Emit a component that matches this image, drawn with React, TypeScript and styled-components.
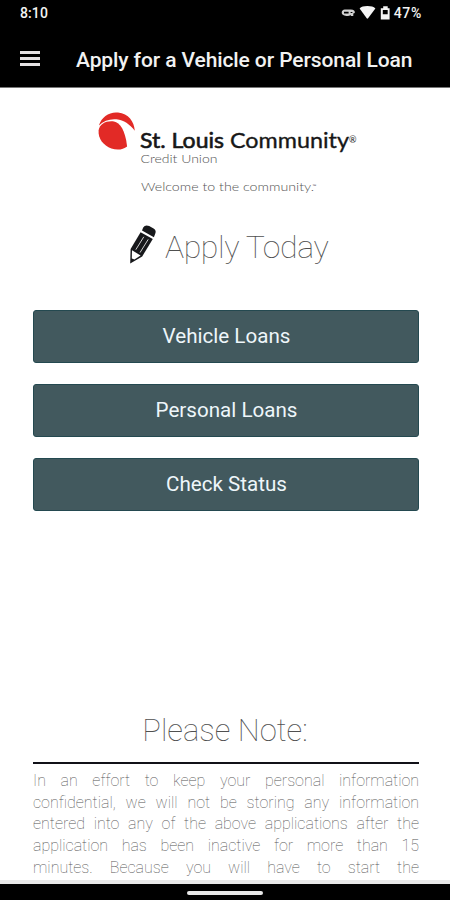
import React from 'react';
import styled, { createGlobalStyle } from 'styled-components';

const GlobalStyle = createGlobalStyle`
  * { box-sizing: border-box; }
  body { margin: 0; background: #fff; font-family: Roboto, sans-serif; }
`;

const Screen = styled.div`
  width: 450px;
  height: 900px;
  display: flex;
  flex-direction: column;
  overflow: hidden;
  background: #fff;
`;

const StatusBar = styled.div`
  flex: none;
  height: 28px;
  padding: 0 29px 2px 20px;
  display: flex;
  align-items: center;
  justify-content: space-between;
  background: #000;
  color: #f4f4f4;
  font-size: 14px;
  font-weight: 500;
`;

const Clock = styled.span`
  letter-spacing: 0.1px;
`;

const StatusIcons = styled.div`
  display: flex;
  align-items: center;
`;

const Battery = styled.span`
  margin-left: 3px;
  letter-spacing: 0.7px;
  margin-right: -1px;
`;

const TopBar = styled.header`
  flex: none;
  height: 60px;
  padding: 2px 0 0 20px;
  display: flex;
  align-items: center;
  background: #000;
  border-bottom: 1px solid #777;
`;

const MenuButton = styled.button`
  width: 20px;
  height: 16px;
  padding: 0;
  border: 0;
  background: none;
  display: flex;
  flex-direction: column;
  justify-content: center;
  gap: 3px;
`;

const MenuLine = styled.span`
  height: 3px;
  background: #e6e2e4;
`;

const Title = styled.h1`
  margin: 3px 0 0 36px;
  font-size: 21px;
  line-height: 28px;
  font-weight: 500;
  letter-spacing: -0.1px;
  color: #f2f2f2;
  white-space: nowrap;
`;

const Content = styled.main`
  flex: 1;
  min-height: 0;
  padding: 22px 31px 0 33px;
  display: flex;
  flex-direction: column;
  overflow: hidden;
`;

const Logo = styled.svg`
  flex: none;
  display: block;
  margin-left: 62px;
`;

const ApplyHeading = styled.h2`
  margin: 29px 0 0 94px;
  height: 44px;
  display: flex;
  align-items: center;
  gap: 8px;
  font-size: 32px;
  font-weight: 100;
  letter-spacing: -0.4px;
  color: #505050;
  white-space: nowrap;
`;

const ApplyLabel = styled.span`
  padding-top: 3px;
`;

const Buttons = styled.div`
  margin-top: 43px;
  display: flex;
  flex-direction: column;
  gap: 21px;
`;

const LoanButton = styled.button`
  height: 53px;
  padding: 0 0 1px 1px;
  border: 1px solid #244950;
  border-radius: 3px;
  background: #42595e;
  color: #eef6fa;
  font: 400 20.6px/24px Roboto, sans-serif;
`;

const NoteHeading = styled.h2`
  margin: 199px 0 0;
  height: 42px;
  line-height: 42px;
  padding-right: 2px;
  text-align: center;
  font-size: 31px;
  font-weight: 100;
  color: #505050;
`;

const Rule = styled.hr`
  width: 100%;
  margin: 10px 0 6px;
  border: 0;
  flex: none;
  height: 2px;
  background: #111118;
`;

const Note = styled.div`
  font-size: 16px;
  line-height: 21.7px;
  font-weight: 100;
  color: #555;
`;

const NoteLine = styled.div`
  text-align: justify;
  text-align-last: justify;
  white-space: nowrap;
`;

const NavBar = styled.footer`
  flex: none;
  height: 20px;
  border-top: 4px solid #e8e8e8;
  background: #000;
  display: flex;
  justify-content: center;
  padding-top: 7px;
`;

const HomeHandle = styled.div`
  width: 76px;
  height: 4px;
  border-radius: 2px;
  background: #e8e8e8;
`;

const noteLines = [
  'In an effort to keep your personal information',
  'confidential, we will not be storing any information',
  'entered into any of the above applications after the',
  'application has been inactive for more than 15',
  'minutes. Because you will have to start the',
];

const StatusGlyphs = () => (
  <svg width="51" height="18" viewBox="339 4 51 18" fill="#f4f4f4">
    <path
      fillRule="evenodd"
      d="M343.8 9.4h6.1q4.4 0 3.9 3.7l-1.5.5v2.4h-2.6v-1.3q-1.4 1.8-4.3 1.3-4.9-.7-4.7-3.6.2-2.7 3.1-3zM343 11.7v1.9h4.6v-1.9zm6.6.2v1.2h1.8v-1.2z"
      opacity=".85"
    />
    <path d="M358.6 8.4q2.4-2.3 7.8-2.3t8 2.3l-7.3 9.9q-.7.8-1.4 0z" />
    <path fillRule="evenodd" d="M382.2 6.3h4.5v1.9h1.9v11.3h-8.8V8.2h2.4zM381.8 10v4.2h4.9V10z" />
  </svg>
);

const BrandLogo = () => (
  <Logo width="262" height="84" viewBox="95 110 262 84" role="img" aria-label="St. Louis Community Credit Union">
    <g fill="#e22a26">
      <path d="M98.9 125.5C101.6 116.8 109.5 111.6 118 112.6C128.6 113.8 134.1 121.5 134.8 130.8C129.5 124.1 124 120.2 116.5 119.3C109.8 118.7 103.8 120.6 98.9 125.5Z" />
      <path d="M98.6 130.5C99.4 123.7 106.5 120.3 114 121.4C119.8 122.6 125.2 129.5 127.1 146.4C123.2 149.7 116.9 150.3 111.4 148.4C103.3 145.6 98 138.5 98.6 130.5Z" />
    </g>
    <g fontFamily="Lato, sans-serif">
      <g fontSize="21.5" stroke="#171717" fill="#171717">
        <text x="140" y="147.5" strokeWidth=".6" textLength="84" lengthAdjust="spacingAndGlyphs">
          St. Louis
        </text>
        <text x="230" y="147.5" strokeWidth=".35" textLength="119" lengthAdjust="spacingAndGlyphs">
          Community
        </text>
      </g>
      <text x="349" y="143" fontSize="9" fill="#222">®</text>
      <g fontWeight="300" fill="#555">
        <text x="140.5" y="163" fontSize="12.5" textLength="77" lengthAdjust="spacingAndGlyphs">
          Credit Union
        </text>
        <text x="141" y="190.5" fontSize="12.5" textLength="173" lengthAdjust="spacingAndGlyphs">
          Welcome to the community.
        </text>
      </g>
      <text x="312.5" y="188" fontSize="5" fill="#555">™</text>
    </g>
  </Logo>
);

const Pencil = () => (
  <svg width="30" height="42" viewBox="127 225 30 42">
    <path d="M143.2 228.6Q145.2 225.2 149.2 227L153.6 229.6Q156.6 231.6 155.3 234.6L153.9 238.2L142 231.6Z" fill="#17181b" />
    <path d="M140.6 233.2L152.8 240L142.2 257.4L130.2 264.5L130.6 250Z" fill="#17181b" />
    <path d="M132 251.2L140.6 256.4L134.4 260.4L131.8 259.4Z" fill="#fff" />
    <path d="M143.8 237.8L135.8 250.7M148.2 240.4L140 253.6" stroke="#cfcfcf" strokeWidth="1" />
  </svg>
);

export default function App() {
  return (
    <>
      <GlobalStyle />
      <Screen>
        <StatusBar>
          <Clock>8:10</Clock>
          <StatusIcons>
            <StatusGlyphs />
            <Battery>47%</Battery>
          </StatusIcons>
        </StatusBar>
        <TopBar>
          <MenuButton aria-label="Menu">
            <MenuLine />
            <MenuLine />
            <MenuLine />
          </MenuButton>
          <Title>Apply for a Vehicle or Personal Loan</Title>
        </TopBar>
        <Content>
          <BrandLogo />
          <ApplyHeading>
            <Pencil />
            <ApplyLabel>Apply Today</ApplyLabel>
          </ApplyHeading>
          <Buttons>
            <LoanButton>Vehicle Loans</LoanButton>
            <LoanButton>Personal Loans</LoanButton>
            <LoanButton>Check Status</LoanButton>
          </Buttons>
          <NoteHeading>Please Note:</NoteHeading>
          <Rule />
          <Note>
            {noteLines.map((line) => (
              <NoteLine key={line}>{line}</NoteLine>
            ))}
          </Note>
        </Content>
        <NavBar>
          <HomeHandle />
        </NavBar>
      </Screen>
    </>
  );
}
